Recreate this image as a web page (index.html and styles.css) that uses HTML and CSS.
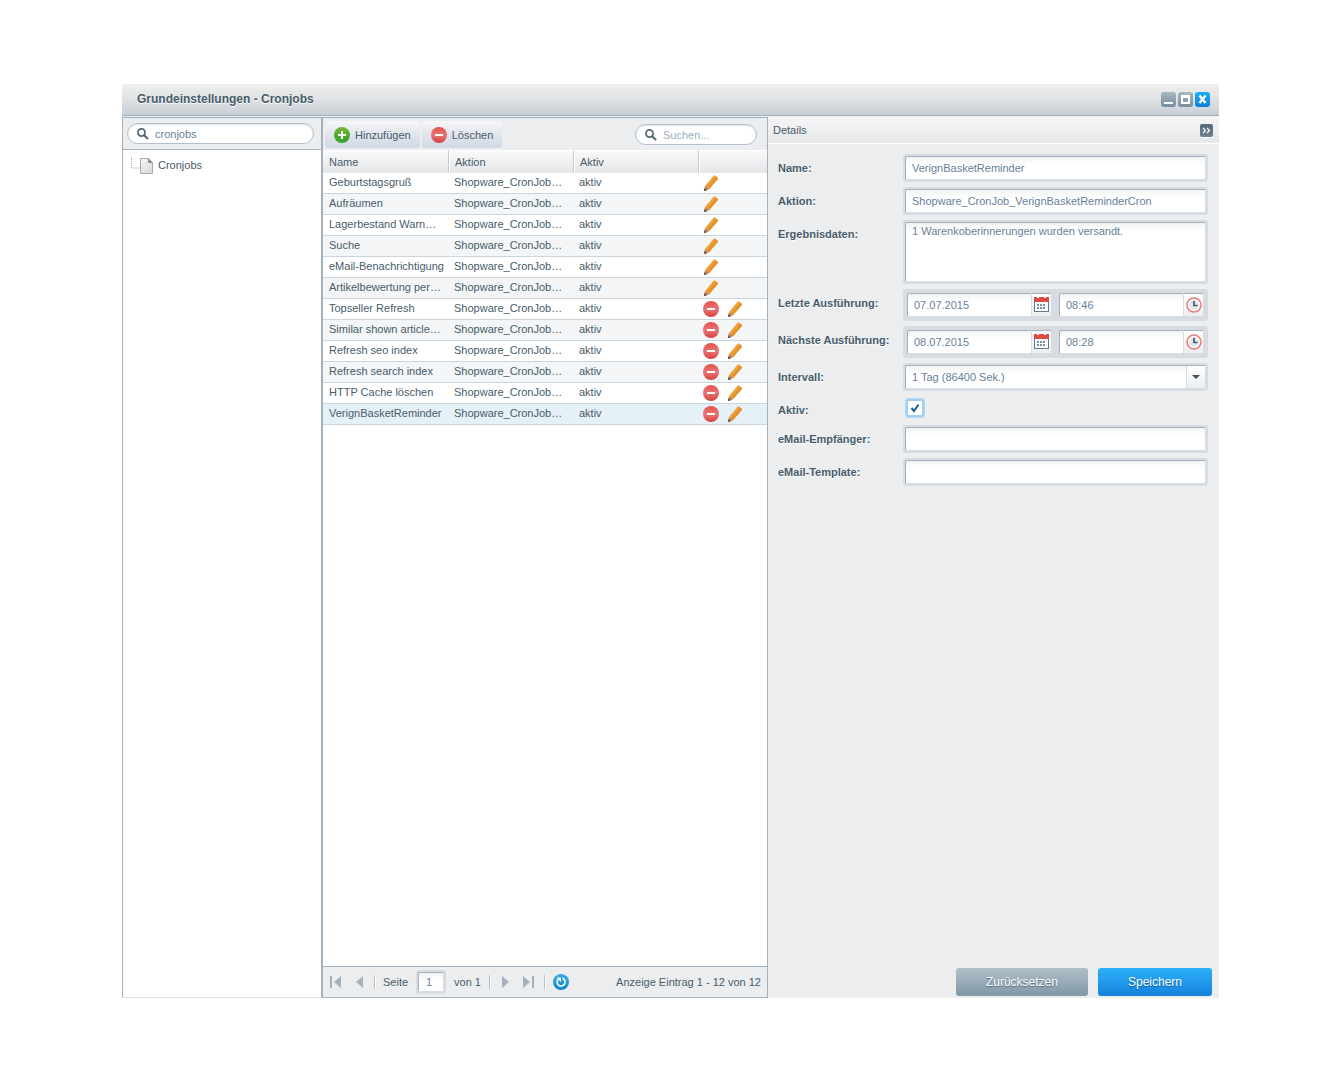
FILE: index.html
```html
<!DOCTYPE html>
<html lang="de">
<head>
<meta charset="utf-8">
<title>Grundeinstellungen - Cronjobs</title>
<link rel="stylesheet" href="styles.css">
</head>
<body>
<svg class="defs" aria-hidden="true">
  <defs>
    <linearGradient id="red" x1="0" y1="0" x2="0" y2="1"><stop offset="0" stop-color="#e4504c"/><stop offset=".5" stop-color="#e97574"/><stop offset="1" stop-color="#d64040"/></linearGradient>
    <linearGradient id="green" x1="0" y1="0" x2="0" y2="1"><stop offset="0" stop-color="#76b82f"/><stop offset="1" stop-color="#2f9e2d"/></linearGradient>
    <linearGradient id="blue" x1="0" y1="0" x2="0" y2="1"><stop offset="0" stop-color="#35b0e6"/><stop offset="1" stop-color="#1283c8"/></linearGradient>
    <linearGradient id="paper" x1="0" y1="0" x2="1" y2="1"><stop offset="0" stop-color="#f6f6f6"/><stop offset="1" stop-color="#d8d8d8"/></linearGradient>
    <symbol id="i-minus" viewBox="0 0 16 16"><circle cx="8" cy="8" r="8" fill="url(#red)"/><rect x="4" y="7" width="8" height="2" fill="#fff"/></symbol>
    <symbol id="i-plus" viewBox="0 0 16 16"><circle cx="8" cy="8" r="8" fill="url(#green)"/><path d="M4 7h3V4h2v3h3v2H9v3H7V9H4z" fill="#fff"/></symbol>
    <symbol id="i-pencil" viewBox="0 0 16 16"><path d="M2 11 10.600.8q.8-.9 1.700-.1l2.200 1.900q.8.800.1 1.700L6 14.200z" fill="#eea235"/><path d="M4 12.600 13 1.600l1.500 1.200q.7.700.1 1.500L6 14.200z" fill="#e3912c"/><path d="M2 11l4 3.200L1.200 16 .9 15.500z" fill="#b5805f"/><path d="M1.500 13.200l2.600 2L.7 16.300z" fill="#75503f"/></symbol>
    <symbol id="i-search" viewBox="0 0 12 12"><circle cx="4.500" cy="4.500" r="3.600" fill="none" stroke="#566873" stroke-width="1.700"/><path d="M7 7l4 4" stroke="#566873" stroke-width="2.200"/></symbol>
    <symbol id="i-calendar" viewBox="0 0 16 16"><rect x=".5" y="2.500" width="14" height="12" fill="#fff" stroke="#667b8a"/><path d="M0 0h3v1h2V0h5v1h2V0h3v5H0z" fill="#dd4b45"/><path d="M3 8h9M3 11h9" stroke="#7d8e9a" stroke-width="2" stroke-dasharray="2 1"/></symbol>
    <symbol id="i-clock" viewBox="0 0 16 16"><circle cx="8" cy="8" r="7" fill="#fff" stroke="#e67c74" stroke-width="1.500"/><circle cx="8" cy="8" r="5" fill="#e3e6e9"/><path d="M8 4v4.500h3.500" fill="none" stroke="#45586a" stroke-width="1.700"/></symbol>
  </defs>
</svg>

<div class="window">
  <header class="titlebar">
    <h1>Grundeinstellungen - Cronjobs</h1>
    <div class="tools">
      <button type="button" class="tool" aria-label="Minimieren"><svg viewBox="0 0 15 15"><path d="M3 10h9v2H3z" fill="#fff"/></svg></button>
      <button type="button" class="tool" aria-label="Maximieren"><svg viewBox="0 0 15 15"><path d="M3 3h9v9H3zM5 6v4h5V6z" fill="#fff" fill-rule="evenodd"/></svg></button>
      <button type="button" class="tool close" aria-label="Schließen"><svg viewBox="0 0 15 15"><path d="M4.500 3.500l6 7.500M10.500 3.500l-6 7.500" stroke="#fff" stroke-width="2.400"/></svg></button>
    </div>
  </header>

  <div class="content">
    <aside class="tree">
      <div class="tree-bar">
        <label class="search"><svg><use href="#i-search"/></svg><input type="text" value="cronjobs" aria-label="Suche"></label>
      </div>
      <a class="node" href="#">
        <svg class="line" viewBox="0 0 9 16"><path d="M.5 0v11h8" fill="none" stroke="#a5adb3" stroke-dasharray="1 1"/></svg>
        <svg class="file" viewBox="0 0 13 16"><path d="M.5.5h8l4 4v11H.5z" fill="url(#paper)" stroke="#a9a9a9"/><path d="M8 0l5 5H8z" fill="#8f8f8f"/></svg>
        Cronjobs
      </a>
    </aside>

    <main class="grid">
      <div class="toolbar">
        <button type="button" class="action"><svg><use href="#i-plus"/></svg>Hinzufügen</button>
        <button type="button" class="action"><svg><use href="#i-minus"/></svg>Löschen</button>
        <label class="search"><svg><use href="#i-search"/></svg><input type="text" placeholder="Suchen..." aria-label="Suchen"></label>
      </div>
      <div class="rows">
        <table>
          <thead><tr><th>Name</th><th>Aktion</th><th>Aktiv</th><th class="icons"></th></tr></thead>
          <tbody>
            <tr><td>Geburtstagsgruß</td><td>Shopware_CronJob…</td><td>aktiv</td><td><div><button type="button" aria-label="Bearbeiten"><svg><use href="#i-pencil"/></svg></button></div></td></tr>
            <tr><td>Aufräumen</td><td>Shopware_CronJob…</td><td>aktiv</td><td><div><button type="button" aria-label="Bearbeiten"><svg><use href="#i-pencil"/></svg></button></div></td></tr>
            <tr><td>Lagerbestand Warn…</td><td>Shopware_CronJob…</td><td>aktiv</td><td><div><button type="button" aria-label="Bearbeiten"><svg><use href="#i-pencil"/></svg></button></div></td></tr>
            <tr><td>Suche</td><td>Shopware_CronJob…</td><td>aktiv</td><td><div><button type="button" aria-label="Bearbeiten"><svg><use href="#i-pencil"/></svg></button></div></td></tr>
            <tr><td>eMail-Benachrichtigung</td><td>Shopware_CronJob…</td><td>aktiv</td><td><div><button type="button" aria-label="Bearbeiten"><svg><use href="#i-pencil"/></svg></button></div></td></tr>
            <tr><td>Artikelbewertung per…</td><td>Shopware_CronJob…</td><td>aktiv</td><td><div><button type="button" aria-label="Bearbeiten"><svg><use href="#i-pencil"/></svg></button></div></td></tr>
            <tr><td>Topseller Refresh</td><td>Shopware_CronJob…</td><td>aktiv</td><td><div><button type="button" aria-label="Löschen"><svg><use href="#i-minus"/></svg></button><button type="button" aria-label="Bearbeiten"><svg><use href="#i-pencil"/></svg></button></div></td></tr>
            <tr><td>Similar shown article…</td><td>Shopware_CronJob…</td><td>aktiv</td><td><div><button type="button" aria-label="Löschen"><svg><use href="#i-minus"/></svg></button><button type="button" aria-label="Bearbeiten"><svg><use href="#i-pencil"/></svg></button></div></td></tr>
            <tr><td>Refresh seo index</td><td>Shopware_CronJob…</td><td>aktiv</td><td><div><button type="button" aria-label="Löschen"><svg><use href="#i-minus"/></svg></button><button type="button" aria-label="Bearbeiten"><svg><use href="#i-pencil"/></svg></button></div></td></tr>
            <tr><td>Refresh search index</td><td>Shopware_CronJob…</td><td>aktiv</td><td><div><button type="button" aria-label="Löschen"><svg><use href="#i-minus"/></svg></button><button type="button" aria-label="Bearbeiten"><svg><use href="#i-pencil"/></svg></button></div></td></tr>
            <tr><td>HTTP Cache löschen</td><td>Shopware_CronJob…</td><td>aktiv</td><td><div><button type="button" aria-label="Löschen"><svg><use href="#i-minus"/></svg></button><button type="button" aria-label="Bearbeiten"><svg><use href="#i-pencil"/></svg></button></div></td></tr>
            <tr class="selected"><td>VerignBasketReminder</td><td>Shopware_CronJob…</td><td>aktiv</td><td><div><button type="button" aria-label="Löschen"><svg><use href="#i-minus"/></svg></button><button type="button" aria-label="Bearbeiten"><svg><use href="#i-pencil"/></svg></button></div></td></tr>
          </tbody>
        </table>
      </div>
      <footer class="paging">
        <button type="button" aria-label="Erste Seite"><svg viewBox="0 0 15 16"><path d="M2 2h2v12H2zM13 2v12L6 8z" fill="#a6b2bb"/></svg></button>
        <button type="button" aria-label="Vorige Seite"><svg viewBox="0 0 15 16"><path d="M12 2v12L5 8z" fill="#a6b2bb"/></svg></button>
        <span class="sep"></span>
        <label for="page">Seite</label>
        <span class="frame page"><input id="page" type="text" value="1"></span>
        <span>von 1</span>
        <span class="sep"></span>
        <button type="button" aria-label="Nächste Seite"><svg viewBox="0 0 15 16"><path d="M4 2v12l7-6z" fill="#a6b2bb"/></svg></button>
        <button type="button" aria-label="Letzte Seite"><svg viewBox="0 0 15 16"><path d="M2 2v12l7-6zM11 2h2v12h-2z" fill="#a6b2bb"/></svg></button>
        <span class="sep"></span>
        <button type="button" class="reload" aria-label="Aktualisieren"><svg viewBox="0 0 16 16"><circle cx="8" cy="8" r="8" fill="url(#blue)"/><path d="M9.500 4.300a4 4 0 1 1-4.300 1" fill="none" stroke="#fff" stroke-width="1.600"/><path d="M3.500 3.500h4.500v4.500z" fill="#fff"/></svg></button>
        <span class="count">Anzeige Eintrag 1 - 12 von 12</span>
      </footer>
    </main>

    <section class="details">
      <header class="details-bar">
        <h2>Details</h2>
        <button type="button" aria-label="Einklappen"><svg viewBox="0 0 11 11"><path d="M2 3l2.500 2.500L2 8M6 3l2.500 2.500L6 8" fill="none" stroke="#fff" stroke-width="1.200"/></svg></button>
      </header>
      <form>
        <div class="field"><label for="name">Name:</label><span class="frame"><input id="name" type="text" value="VerignBasketReminder"></span></div>
        <div class="field"><label for="action">Aktion:</label><span class="frame"><input id="action" type="text" value="Shopware_CronJob_VerignBasketReminderCron"></span></div>
        <div class="field"><label for="result">Ergebnisdaten:</label><span class="frame"><textarea id="result">1 Warenkoberinnerungen wurden versandt.</textarea></span></div>
        <div class="field"><label for="last">Letzte Ausführung:</label>
          <span class="frame pair">
            <span class="trigger"><input id="last" type="text" value="07.07.2015"><button type="button" aria-label="Datum wählen"><svg><use href="#i-calendar"/></svg></button></span>
            <span class="trigger"><input type="text" value="08:46" aria-label="Uhrzeit letzte Ausführung"><button type="button" aria-label="Uhrzeit wählen"><svg><use href="#i-clock"/></svg></button></span>
          </span></div>
        <div class="field"><label for="next">Nächste Ausführung:</label>
          <span class="frame pair">
            <span class="trigger"><input id="next" type="text" value="08.07.2015"><button type="button" aria-label="Datum wählen"><svg><use href="#i-calendar"/></svg></button></span>
            <span class="trigger"><input type="text" value="08:28" aria-label="Uhrzeit nächste Ausführung"><button type="button" aria-label="Uhrzeit wählen"><svg><use href="#i-clock"/></svg></button></span>
          </span></div>
        <div class="field"><label for="interval">Intervall:</label><span class="frame combo"><select id="interval"><option>1 Tag (86400 Sek.)</option></select><span class="arrow"><svg viewBox="0 0 8 4"><path d="M0 0h8L4 4z" fill="#3f4f5a"/></svg></span></span></div>
        <div class="field check"><label for="active">Aktiv:</label><span class="box"><input id="active" type="checkbox" checked><svg viewBox="0 0 10 10"><path d="M1.500 5l2.500 3L8.500 1.500" fill="none" stroke="#1e5f93" stroke-width="2"/></svg></span></div>
        <div class="field"><label for="mail">eMail-Empfänger:</label><span class="frame"><input id="mail" type="text"></span></div>
        <div class="field"><label for="template">eMail-Template:</label><span class="frame"><input id="template" type="text"></span></div>
        <div class="buttons">
          <button type="reset" class="btn">Zurücksetzen</button>
          <button type="submit" class="btn primary">Speichern</button>
        </div>
      </form>
    </section>
  </div>
</div>
</body>
</html>
```
FILE: styles.css
```css
* { box-sizing: border-box; }

body {
  margin: 0;
  padding: 84px 121px 84px 122px;
  min-height: 100vh;
  display: flex;
  background: #fff;
  color: #475c6a;
  font: 11px/14px "Liberation Sans", Arial, sans-serif;
}

h1, h2 { margin: 0; }
button, input, textarea, select { font: inherit; color: inherit; margin: 0; }
button { border: 0; padding: 0; background: none; }
input, textarea, select { border: 0; outline: 0; min-width: 0; border-radius: 0; }
svg { display: block; flex: none; }
.defs { position: absolute; width: 0; height: 0; }

.window { flex: 1; display: flex; flex-direction: column; min-width: 0; background: #ebedef; }

.titlebar {
  display: flex;
  align-items: center;
  justify-content: space-between;
  height: 32px;
  padding: 0 9px 2px 15px;
  border-bottom: 1px solid #a2b1bc;
  border-top-right-radius: 2px;
  background: linear-gradient(#efefee, #dfe2e4 50%, #c6ced5);
}
.titlebar h1 { font-size: 12px; line-height: 16px; text-shadow: 0 1px 0 #fff; }
.tools { display: flex; gap: 2px; padding-top: 2px; }
.tool { width: 15px; height: 15px; border-radius: 3px; background: linear-gradient(#a9b8c2, #768c9c); }
.tool.close { background: linear-gradient(#1cb0fa, #0b7fd9); }

.content { flex: 1; display: flex; padding-top: 1px; }

.search {
  display: flex;
  align-items: center;
  gap: 6px;
  height: 21px;
  padding: 0 9px;
  border: 1px solid #b3c0cb;
  border-radius: 11px;
  background: #fff;
  box-shadow: inset 0 1px 2px #dfe4e8;
}
.search svg { width: 12px; height: 12px; }
.search input { flex: 1; background: none; color: #66819a; padding: 0; }
.search input::placeholder { color: #9bb0c0; }

.tree { width: 200px; background: #fff; border: 1px solid #a2b1bc; border-bottom-color: #d9dfe5; }
.tree-bar { height: 32px; padding: 5px 7px 0 4px; background: #ebedef; border-bottom: 1px solid #a2b1bc; }
.node { display: flex; align-items: center; padding: 6px 8px; color: #475c6a; text-decoration: none; line-height: 16px; }
.node .line { width: 9px; height: 16px; }
.node .file { width: 13px; height: 16px; margin: 2px 5px 0 0; }

.grid { flex: 1; min-width: 0; display: flex; flex-direction: column; background: #fff; border: 1px solid #a2b1bc; }
.toolbar { display: flex; align-items: center; gap: 2px; height: 32px; padding: 1px 10px 0 2px; background: #ebedef; }
.toolbar .search { width: 122px; margin-left: auto; }
.action {
  display: flex;
  align-items: center;
  gap: 5px;
  height: 27px;
  padding: 0 9px;
  border-radius: 3px;
  background: linear-gradient(#f6f7f8, #e0e5ec 50%, #cfd9e4);
}
.action svg { width: 16px; height: 16px; }

.rows { flex: 1; }
table { width: 100%; table-layout: fixed; border-collapse: separate; border-spacing: 0; }
th {
  height: 23px;
  padding: 0 6px;
  text-align: left;
  font-weight: normal;
  border-top: 1px solid #fff;
  background: linear-gradient(#f9f9f9, #e4e5e7);
}
th + th { border-left: 1px solid #c4ccd2; box-shadow: inset 1px 0 0 #fff; }
th.icons { width: 69px; }
td { height: 21px; padding: 0 3px 2px 6px; border-bottom: 1px solid #c9d4dc; white-space: nowrap; overflow: hidden; text-overflow: ellipsis; line-height: 14px; }
td:last-child { padding: 0 5px; }
td div { display: flex; gap: 8px; }
td svg { width: 16px; height: 16px; }
tbody tr:nth-child(even) { background: #f3f5f6; }
tbody tr.selected { background: #e5f0f7; }

.paging { display: flex; align-items: center; gap: 8px; height: 31px; padding: 0 6px 0 5px; background: #ebedef; border-top: 1px solid #a2b1bc; }
.paging svg { width: 15px; height: 16px; }
.paging .reload svg { width: 16px; }
.paging .count { margin-left: auto; }
.sep { width: 1px; height: 14px; background: #b3bec7; box-shadow: 1px 0 0 #fff; }

.frame { display: flex; padding: 2px; border-radius: 3px; background: #d7dce3; min-width: 0; }
.frame input, .frame textarea, .frame select {
  flex: 1;
  width: 100%;
  height: 24px;
  padding: 0 6px;
  border: 1px solid #a5b1ba;
  border-right-color: #d7dce3;
  border-bottom-color: #d7dce3;
  border-radius: 2px;
  background: linear-gradient(#f1f3f3, #fff 8px);
  color: #66819a;
}
.frame textarea { height: 60px; padding: 0 6px; line-height: 16px; resize: none; }
.page { width: 30px; }
.frame.page input { height: 20px; padding: 0 7px; }

.details { width: 451px; display: flex; flex-direction: column; background: #ebedef; }
.details-bar { display: flex; align-items: center; justify-content: space-between; height: 27px; padding: 0 6px 0 5px; border-bottom: 1px solid #fff; background: linear-gradient(#f6f6f7, #e5e7e9); }
.details-bar h2 { font-size: 11px; font-weight: normal; }
.details-bar button { width: 13px; height: 13px; padding: 1px; border: 0; border-radius: 2px; background: linear-gradient(#566b7a, #6d8292); box-shadow: 0 1px 0 #fff; }

form { flex: 1; display: flex; flex-direction: column; gap: 5px; padding: 10px 7px 2px 10px; }
.field { display: grid; grid-template-columns: 125px 1fr; padding-right: 4px; }
.field > label { font-weight: bold; line-height: 28px; text-shadow: 0 1px 0 #fff; height: 28px; }
.frame.pair { gap: 7px; padding: 4px; height: 32px; }
.trigger { flex: 1; display: flex; min-width: 0; }
.trigger button { width: 21px; padding: 0 2px; border: 1px solid #d7dce3; border-top-color: #a5b1ba; border-radius: 0 2px 2px 0; background: linear-gradient(#fff, #eceeef); }
.frame .trigger input { border-right: 0; border-radius: 2px 0 0 2px; }
.trigger svg { width: 16px; height: 16px; }
.combo { position: relative; }
.combo select { appearance: none; }
.arrow { position: absolute; right: 3px; top: 3px; width: 19px; height: 22px; display: grid; place-items: center; border-left: 1px solid #d7dce3; background: linear-gradient(#fff, #eceeef); pointer-events: none; }
.arrow svg { width: 8px; height: 4px; }

.check { height: 24px; }
.box { display: grid; place-items: center; width: 18px; height: 18px; margin: 3px; border-radius: 2px; background: #fff; box-shadow: 0 0 0 1px #b3dbf6; }
.box input, .box svg { grid-area: 1 / 1; }
.box input { appearance: none; width: 18px; height: 18px; border: 2px solid #9fd0f3; border-radius: 2px; }
.box svg { width: 10px; height: 10px; pointer-events: none; }

.buttons { display: flex; justify-content: flex-end; gap: 10px; margin-top: auto; }
.btn { height: 28px; padding: 0 30px; border-radius: 3px; font-size: 12px; color: #fff; text-shadow: 0 1px 1px #56697a; background: linear-gradient(#b0bfc9, #8197a6); }
.btn.primary { background: linear-gradient(#2db1f9, #1581dc); text-shadow: 0 1px 1px #0d5c9e; }
```
